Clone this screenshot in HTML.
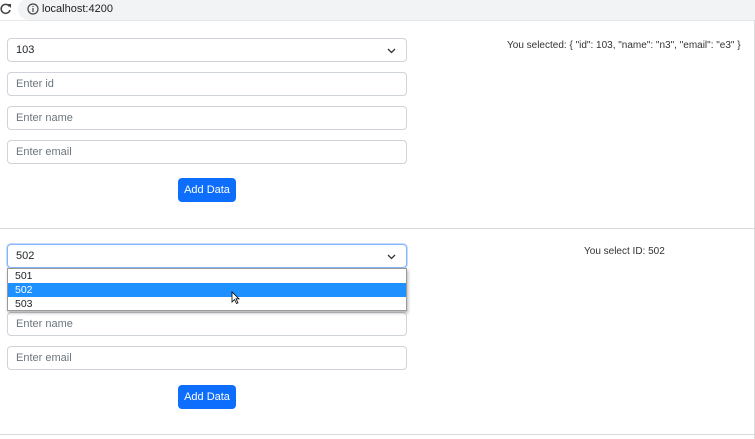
<!DOCTYPE html>
<html><head><meta charset="utf-8"><style>
*{box-sizing:border-box;margin:0;padding:0}
body{width:755px;height:439px;background:#fff;font-family:"Liberation Sans",sans-serif;position:relative;overflow:hidden;color:#212529}
.bar{position:absolute;left:18px;top:-2px;width:737px;height:22px;background:#f1f3f4;border-radius:11px 0 0 11px}
.url{position:absolute;left:42px;top:3px;font-size:11px;color:#202124}
.f{position:absolute;left:7px;width:400px;height:24px;border:1px solid #ced4da;border-radius:4px;font-size:11px;padding:5px 0 0 8px;color:#6c757d;background:#fff}
.sel{color:#212529}
.chev{position:absolute;right:10px;top:9px}
.btn{position:absolute;left:178px;width:58px;height:24px;background:#0d6efd;border-radius:4px;color:#fff;font-size:11px;text-align:center;line-height:24px}
.hr{position:absolute;left:0;width:755px;height:1px;background:#d9d9d9}
.txt{position:absolute;font-size:10px;color:#333}
.dd{position:absolute;left:7px;top:268px;width:400px;height:43px;border:1px solid #9a9a9a;background:#fff;box-shadow:1px 2px 3px rgba(0,0,0,.3);font-size:10.5px}
.dd div{height:14px;line-height:14px;padding-left:7px}
</style></head><body>
<div class="bar"></div>
<svg style="position:absolute;left:0;top:3px" width="12" height="12" viewBox="0 0 12 12"><path d="M9.5 3.5A4.5 4.5 0 1 0 10 7" fill="none" stroke="#444" stroke-width="1.5"/><path d="M7 1h4v4z" fill="#444"/></svg>
<svg style="position:absolute;left:27px;top:3px" width="12" height="12" viewBox="0 0 12 12"><circle cx="6" cy="6" r="5" fill="none" stroke="#444" stroke-width="1.2"/><path d="M6 5v4M6 3v1" stroke="#444" stroke-width="1.2"/></svg>
<div class="url">localhost:4200</div>
<div style="position:absolute;left:0;top:20px;width:755px;height:1px;background:#e8e8e8"></div>
<div style="position:absolute;left:754px;top:20px;width:1px;height:419px;background:#ddd"></div>

<div class="f sel" style="top:38px">103<svg class="chev" width="9" height="6" viewBox="0 0 9 6"><path d="M1 1l3.5 3.5L8 1" fill="none" stroke="#333" stroke-width="1.3"/></svg></div>
<div class="f" style="top:72px">Enter id</div>
<div class="f" style="top:106px">Enter name</div>
<div class="f" style="top:140px">Enter email</div>
<div class="btn" style="top:178px">Add Data</div>
<div class="txt" style="left:507px;top:40px">You selected: { "id": 103, "name": "n3", "email": "e3" }</div>
<div class="hr" style="top:228px"></div>

<div class="f sel" style="top:244px;border-color:#86b7fe;box-shadow:0 0 0 1px #c6dbfd">502<svg class="chev" width="9" height="6" viewBox="0 0 9 6"><path d="M1 1l3.5 3.5L8 1" fill="none" stroke="#333" stroke-width="1.3"/></svg></div>
<div class="f" style="top:312px">Enter name</div>
<div class="f" style="top:346px">Enter email</div>
<div class="dd"><div>501</div><div style="background:#1e90ff;color:#fff">502</div><div>503</div></div>
<svg style="position:absolute;left:231px;top:291px" width="10" height="14" viewBox="0 0 10 14"><path d="M1 1v10l2.5-2.5 2 4 1.5-.7-2-4H8z" fill="#fff" stroke="#000" stroke-width=".8"/></svg>
<div class="btn" style="top:385px">Add Data</div>
<div class="txt" style="left:584px;top:246px">You select ID: 502</div>
<div class="hr" style="top:434px"></div>
</body></html>
